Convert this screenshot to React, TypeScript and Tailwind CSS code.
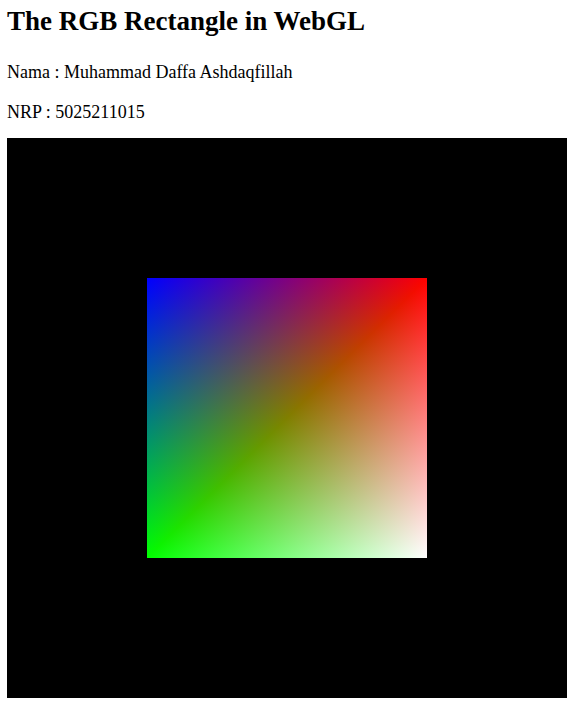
export default function App() {
  return (
    <div className="px-[7px] bg-white text-black">
      <div className="font-['Liberation_Serif',serif]">
        <h1 className="text-[27px] font-bold leading-[31px] pt-[6px] m-0">The RGB Rectangle in WebGL</h1>
        <p className="text-[18px] leading-[20px] mt-[25px]">Nama : Muhammad Daffa Ashdaqfillah</p>
        <p className="text-[18px] leading-[20px] mt-[20px]">NRP : 5025211015</p>
      </div>
      <div className="mt-[16px] w-[560px] h-[560px] bg-black flex items-center justify-center">
        <div className="w-[280px] h-[280px] bg-black bg-blend-lighten bg-[linear-gradient(to_right,#000,#f00),linear-gradient(to_bottom,#000,#0f0),linear-gradient(to_bottom_right,#00f,#000,#00f)]" />
      </div>
    </div>
  );
}
